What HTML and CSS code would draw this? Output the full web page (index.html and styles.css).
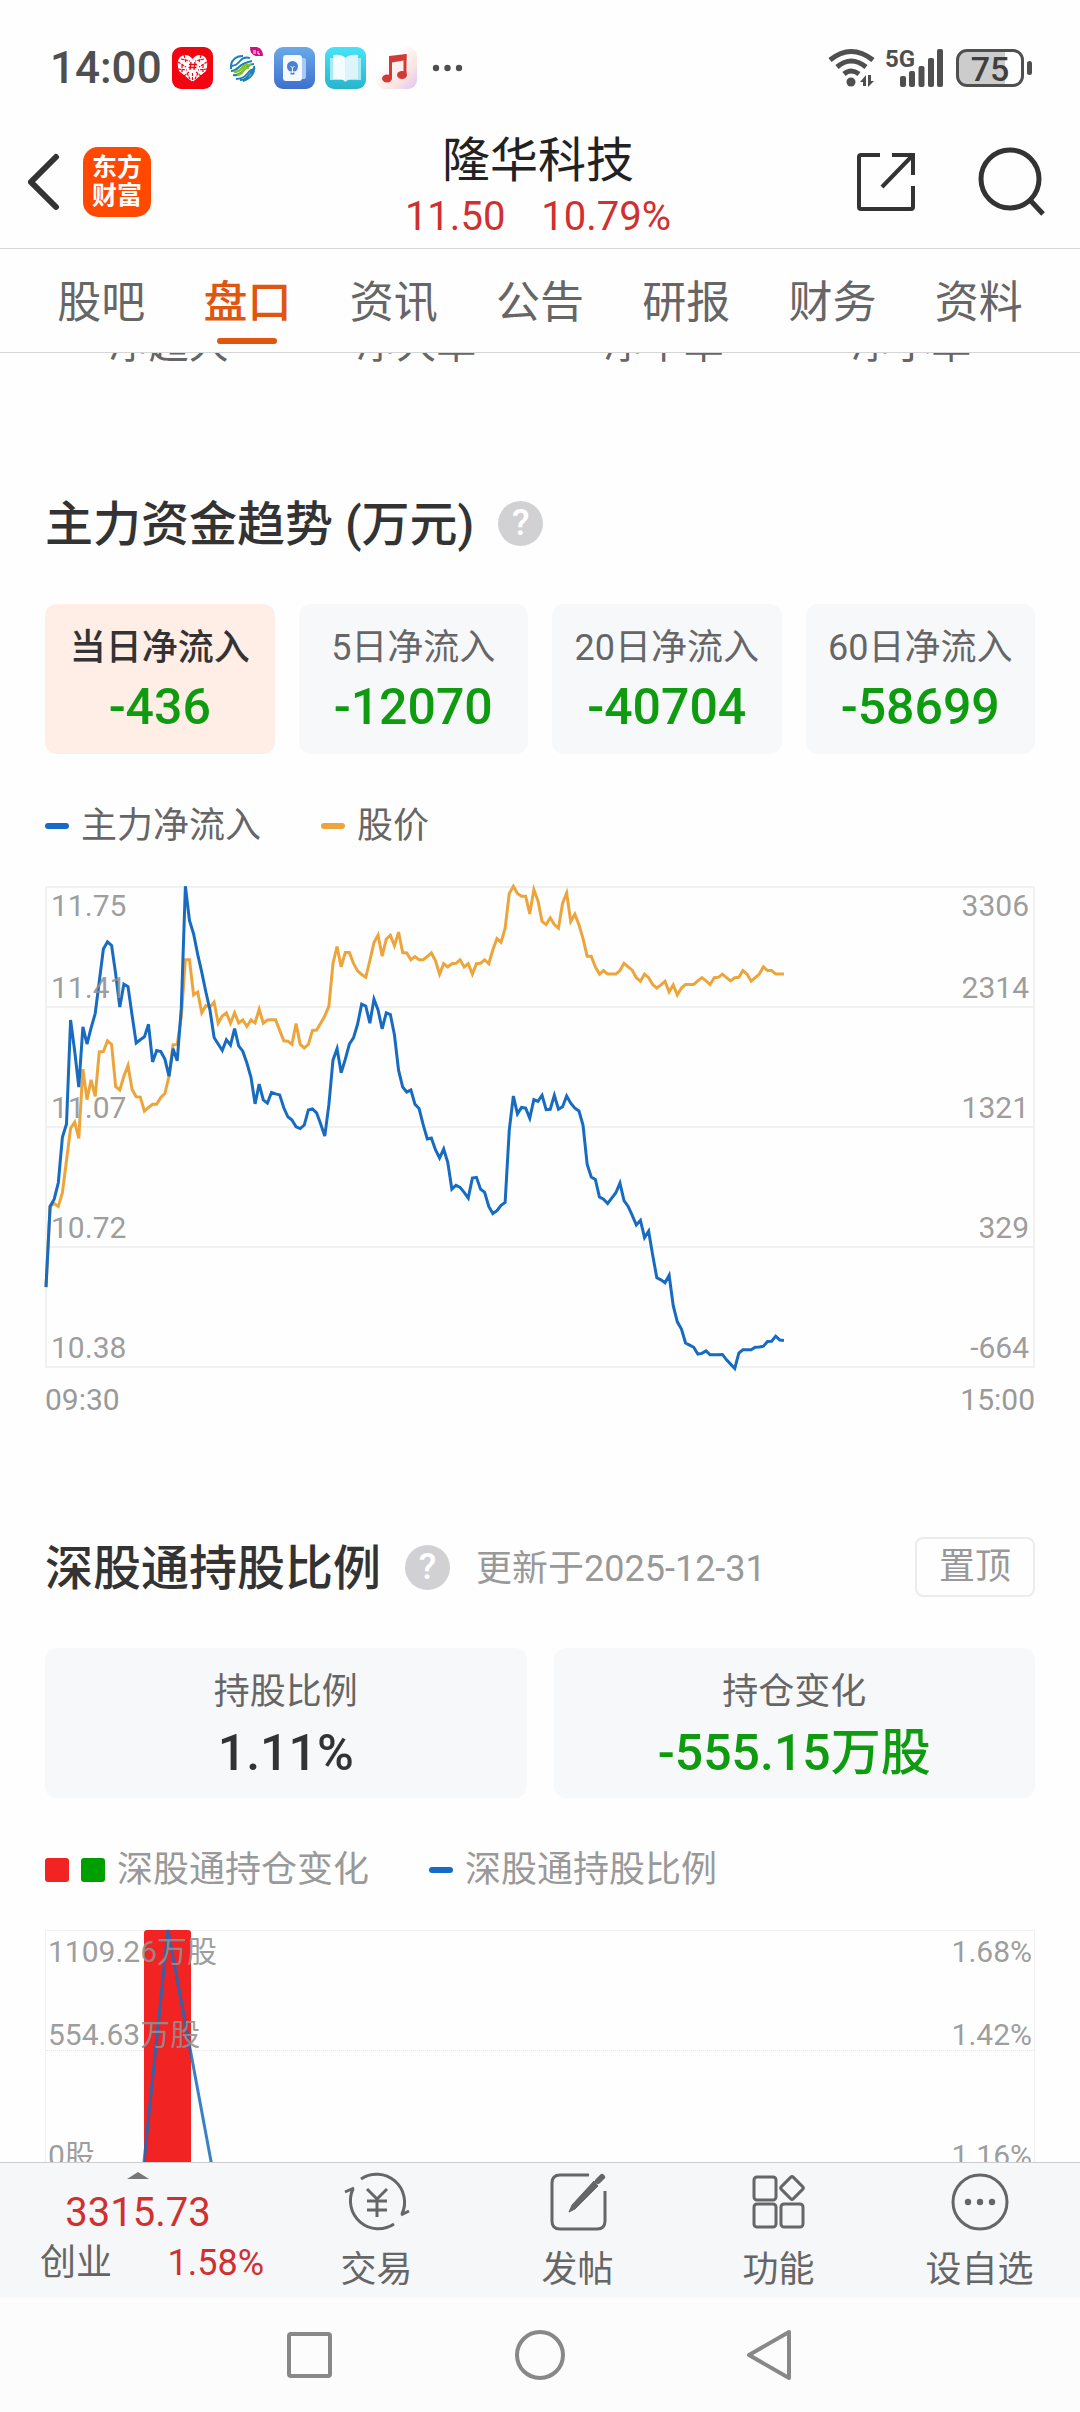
FILE: index.html
```html
<!DOCTYPE html>
<html lang="zh-CN">
<head>
  <meta charset="UTF-8" />
  <meta name="viewport" content="width=device-width, initial-scale=1.0"/>
  <title>隆华科技</title>
  <link rel="stylesheet" href="styles.css">
</head>
<body>
  <div class="status">
    <span class="status-time">14:00</span>
    <div class="status-apps">
      <svg viewBox="0 0 41 42">
        <rect width="41" height="42" rx="9" fill="#f20510"/>
        <path d="M20.500 35L7 24Q4 15 8 10Q15 5 20.500 12Q26 5 33 10Q37 15 34 24Z" fill="#fff"/>
        <path d="M6 15l8 5M12 8l2 8M35 15l-8 5M29 8l-2 8M6 22l9 1M35 22l-9 1M12 29l5-4M29 29l-5-4M20.500 26v9M9 12l9 2M32 12l-9 2M10 18v8M31 18v8M15 26l3 6M26 26l-3 6" stroke="#f20510" stroke-width="1.200" stroke-dasharray="3 1"/>
        <path d="M19 15l-1 8M23 15l-1 8M17 17.500h8M16.500 20.500h8" stroke="#f20510" stroke-width="1.300"/>
      </svg>
      <svg viewBox="0 0 41 42" fill="none">
        <path d="M8 18Q10 9 20 9M8 22v-3q5 0 9-5t10-3M8 24q4 0 8-4t13-6M31 19q1 5-2 9t-9 6M32 22q-4 0-8 5t-11 5M31 17q-5 0-10 6t-11 5M17 33q5 0 8-4t6-5" stroke="#1b7fb8" stroke-width="2"/>
        <path d="M11 25q5 0 8-4t7-3l2-1M14 28q4 0 6-4t6-3" stroke="#8cc220" stroke-width="2.400"/>
        <path d="M27 0h7q6 2 6 9h-7q-6-1-6-9z" fill="#cf1080"/>
        <path d="M30 4h3M30 6h3M35 4v3h2" stroke="#fff"/>
      </svg>
      <svg viewBox="0 0 41 42">
        <defs><linearGradient id="note" x2="0" y2="1"><stop stop-color="#6aa9ea"/><stop offset="1" stop-color="#3f70cd"/></linearGradient></defs>
        <rect width="41" height="42" rx="9" fill="url(#note)"/>
        <rect x="26" y="11" width="6" height="21" rx="2" fill="#a9c8f3"/>
        <rect x="9" y="8" width="19" height="26" rx="3" fill="#f5f9ff"/>
        <circle cx="18.500" cy="19.500" r="5.500" fill="#4a80d6"/>
        <path d="M16 25h5v3h-5zM16.500 19l2 2 2-2M18.500 21v5" fill="#4a80d6" stroke="#f5f9ff"/>
      </svg>
      <svg viewBox="0 0 41 42">
        <defs><linearGradient id="book" x2="0" y2="1"><stop stop-color="#46e4f7"/><stop offset="1" stop-color="#28b4cc"/></linearGradient></defs>
        <rect width="41" height="42" rx="9" fill="url(#book)"/>
        <path d="M5 11h31v22H23l-2.500 2L18 33H5z" fill="#a8e9f2"/>
        <path d="M8 8q9-1 12.500 3v23q-4-3-12.500-2z" fill="#f4fcff"/>
        <path d="M33 8q-9-1-12.500 3v23q4-3 12.500-2z" fill="#dff3fa"/>
      </svg>
      <svg viewBox="0 0 41 42">
        <defs><linearGradient id="music" x2="1" y2="1"><stop offset=".3" stop-color="#fff"/><stop offset=".7" stop-color="#fbe3e0"/><stop offset="1" stop-color="#dcc4f8"/></linearGradient></defs>
        <rect width="41" height="42" rx="9" fill="url(#music)"/>
        <path d="M14.500 31V12L29 9v19" fill="none" stroke="#d33a35" stroke-width="3"/>
        <path d="M13 9l17.500-2v6L13 16z" fill="#d33a35"/>
        <ellipse cx="11" cy="31.500" rx="5" ry="4" fill="#d33a35"/>
        <ellipse cx="26" cy="28" rx="5" ry="4" fill="#d33a35"/>
      </svg>
      <svg viewBox="0 0 41 42" fill="#4f4f4f"><circle cx="9" cy="21" r="3.200"/><circle cx="20.500" cy="21" r="3.200"/><circle cx="32" cy="21" r="3.200"/></svg>
    </div>
    <div class="status-signal">
      <svg class="wifi" viewBox="0 0 48 40" fill="none" stroke="#4f4f4f" stroke-width="5">
        <path d="M2 12Q23-5 45 12M9 19Q23 7 38 19M16 26Q23 20 31 26"/>
        <circle cx="23" cy="34" r="4.500" fill="#4f4f4f" stroke="none"/>
        <path d="M32 34l6-7v11h-3v-4zM46 33l-6 6V27h3v6z" fill="#4f4f4f" stroke="none"/>
      </svg>
      <div class="cell">
        <span class="cell-type">5G</span>
        <svg viewBox="0 0 44 38" fill="#4f4f4f">
          <rect y="27" width="6" height="11" rx="2"/><rect x="9" y="22" width="6" height="16" rx="2"/><rect x="18.500" y="17" width="6" height="21" rx="2"/><rect x="28" y="9" width="6" height="29" rx="2"/><rect x="37" width="6" height="38" rx="2"/>
        </svg>
      </div>
      <div class="battery">75</div>
    </div>
  </div>

  <header class="header">
    <div class="header-side">
      <button class="icon-btn" aria-label="返回">
        <svg width="34" height="58" viewBox="0 0 34 58" fill="none" stroke="#333" stroke-width="6" stroke-linecap="round"><path d="M28 4L3 29l25 25"/></svg>
      </button>
      <a class="logo" href="#">东方<br>财富</a>
    </div>
    <div class="stock">
      <h1>隆华科技</h1>
      <p><span>11.50</span><span>10.79%</span></p>
    </div>
    <div class="header-side header-right">
      <button class="icon-btn" aria-label="分享">
        <svg width="60" height="60" viewBox="0 0 60 60" fill="none" stroke="#333" stroke-width="4"><path d="M24 3H5q-2 0-2 2v50q0 2 2 2h50q2 0 2-2V34M36 3h21v20M57 3L26 35"/></svg>
      </button>
      <button class="icon-btn" aria-label="搜索">
        <svg width="70" height="70" viewBox="0 0 70 70" fill="none" stroke="#333" stroke-width="5"><circle cx="32" cy="32" r="29"/><path d="M52 53l13 14"/></svg>
      </button>
    </div>
  </header>

  <nav class="tabs">
    <a href="#">股吧</a>
    <a href="#" class="active">盘口</a>
    <a href="#">资讯</a>
    <a href="#">公告</a>
    <a href="#">研报</a>
    <a href="#">财务</a>
    <a href="#">资料</a>
  </nav>

  <main>
    <div class="orders">
      <span>净超大</span><span>净大单</span><span>净中单</span><span>净小单</span>
    </div>

    <section>
      <div class="section-head">
        <h2>主力资金趋势 (万元)</h2>
        <button class="help" aria-label="说明">?</button>
      </div>
      <div class="cards">
        <button class="card active"><span>当日净流入</span><b class="green">-436</b></button>
        <button class="card"><span>5日净流入</span><b class="green">-12070</b></button>
        <button class="card"><span>20日净流入</span><b class="green">-40704</b></button>
        <button class="card"><span>60日净流入</span><b class="green">-58699</b></button>
      </div>
      <div class="legend">
        <span><i class="dash blue"></i>主力净流入</span>
        <span><i class="dash orange"></i>股价</span>
      </div>
      <div class="chart">
        <svg viewBox="0 47 2970 1339" preserveAspectRatio="none">
          <polyline id="priceLine" class="line-orange" />
          <polyline id="flowLine" class="line-blue" />
        </svg>
        <div class="chart-row first">
          <p><span>11.75</span><span>3306</span></p>
          <p><span>11.41</span><span>2314</span></p>
        </div>
        <div class="chart-row"><p><span>11.07</span><span>1321</span></p></div>
        <div class="chart-row"><p><span>10.72</span><span>329</span></p></div>
        <div class="chart-row"><p><span>10.38</span><span>-664</span></p></div>
      </div>
      <div class="axis"><span>09:30</span><span>15:00</span></div>
    </section>

    <section>
      <div class="section-head">
        <h2>深股通持股比例</h2>
        <button class="help" aria-label="说明">?</button>
        <span class="updated">更新于2025-12-31</span>
        <button class="pin">置顶</button>
      </div>
      <div class="cards two">
        <div class="card"><span>持股比例</span><b>1.11%</b></div>
        <div class="card"><span>持仓变化</span><b class="green">-555.15万股</b></div>
      </div>
      <div class="legend light">
        <span><i class="square red"></i><i class="square green-bg"></i>深股通持仓变化</span>
        <span><i class="dash blue"></i>深股通持股比例</span>
      </div>
      <div class="chart holding">
        <svg viewBox="0 0 990 240" preserveAspectRatio="none">
          <rect x="99" y="0" width="47" height="240" rx="3" fill="#f22323"/>
          <polyline class="line-blue faded" points="98,240 123,0 168,240" />
        </svg>
        <div class="chart-row first">
          <p><span>1109.26万股</span><span>1.68%</span></p>
          <p><span>554.63万股</span><span>1.42%</span></p>
        </div>
        <div class="chart-row"><p><span>0股</span><span>1.16%</span></p></div>
      </div>
    </section>
  </main>

  <footer class="toolbar">
    <a href="#" class="index">
      <i class="caret"></i>
      <strong>3315.73</strong>
      <span class="index-row"><span>创业</span><em>1.58%</em></span>
    </a>
    <a href="#">
      <svg viewBox="0 0 66 60"><path d="M17 7A28 28 0 0 1 58 42M50 52A28 28 0 0 1 9 17M1 20l9-4M57 43l8-4M23 17l10 10 10-10M33 27v18M23 29h20M23 38h20"/></svg>
      <span>交易</span>
    </a>
    <a href="#">
      <svg viewBox="0 0 66 60"><path d="M44 3H15q-8 0-8 8v38q0 8 8 8h37q8 0 8-8V19"/><path d="M57 5l-4 4" stroke-width="6" stroke-linecap="round"/><path d="M49 9l4 5-23 23-6 3 3-7z" fill="#666" stroke-width="1"/></svg>
      <span>发帖</span>
    </a>
    <a href="#">
      <svg viewBox="0 0 66 60"><rect x="8" y="5" width="22" height="23" rx="3"/><rect x="8" y="32" width="22" height="23" rx="3"/><rect x="35" y="32" width="22" height="23" rx="3"/><rect x="37.500" y="7.500" width="17" height="17" rx="2" transform="rotate(45 46 16)"/></svg>
      <span>功能</span>
    </a>
    <a href="#">
      <svg viewBox="0 0 66 60"><circle cx="33" cy="30" r="27"/><g fill="#666" stroke="none"><circle cx="21" cy="30" r="3.200"/><circle cx="33" cy="30" r="3.200"/><circle cx="45" cy="30" r="3.200"/></g></svg>
      <span>设自选</span>
    </a>
  </footer>

  <div class="sysnav">
    <button aria-label="最近任务"><svg viewBox="0 0 54 54"><rect x="6" y="6" width="41" height="42" rx="2"/></svg></button>
    <button aria-label="主页"><svg viewBox="0 0 54 54"><circle cx="27" cy="27" r="23"/></svg></button>
    <button aria-label="返回"><svg viewBox="0 0 54 54"><path d="M46 4v46L6 27z"/></svg></button>
  </div>

  <script src="chart.js"></script>
</body>
</html>
```
FILE: styles.css
```css
* {
  box-sizing: border-box;
}

body {
  margin: 0;
  height: 100vh;
  display: flex;
  flex-direction: column;
  background: #fefefe;
  color: #333;
  font-family: Roboto, "Noto Sans CJK SC", sans-serif;
  font-size: 36px;
  line-height: 44px;
}

h1, h2, p {
  margin: 0;
}

a {
  color: inherit;
  text-decoration: none;
}

button {
  padding: 0;
  border: 0;
  background: none;
  color: inherit;
  font: inherit;
}

svg {
  display: block;
}

/* status bar */
.status {
  flex: none;
  height: 136px;
  padding: 0 56px 0 50px;
  display: flex;
  align-items: center;
  color: #4f4f4f;
}

.status-time {
  font-size: 44px;
  font-weight: 500;
}

.status-apps {
  display: flex;
  gap: 10px;
  margin-left: 10px;
}

.status-apps svg {
  width: 41px;
  height: 42px;
}

.status-signal {
  display: flex;
  align-items: center;
  gap: 12px;
  margin-left: auto;
}

.wifi {
  width: 48px;
  height: 40px;
}

.cell {
  position: relative;
  padding-left: 12px;
}

.cell svg {
  width: 44px;
  height: 38px;
}

.cell-type {
  position: absolute;
  left: -3px;
  top: 0;
  font-size: 24px;
  font-weight: 700;
  line-height: 20px;
}

.battery {
  position: relative;
  width: 68px;
  height: 38px;
  border: 3px solid #4f4f4f;
  border-radius: 11px;
  background: linear-gradient(90deg, #ccc 75%, #fefefe 75%);
  color: #3f3f3f;
  font-size: 34px;
  font-weight: 500;
  line-height: 34px;
  text-align: center;
}

.battery::after {
  content: "";
  position: absolute;
  right: -11px;
  top: 9px;
  width: 5px;
  height: 14px;
  border-radius: 3px;
  background: #4f4f4f;
}

/* header */
.header {
  flex: none;
  height: 113px;
  padding: 0 28px 20px;
  display: flex;
  align-items: center;
  border-bottom: 1px solid #d5d5d5;
}

.header-side {
  flex: 1;
  display: flex;
  align-items: center;
  gap: 21px;
}

.header-right {
  justify-content: flex-end;
  gap: 62px;
  padding-right: 4px;
}

.logo {
  width: 68px;
  height: 70px;
  padding: 7px 0;
  border-radius: 15px;
  background: #ff4800;
  color: #fff;
  font-size: 25px;
  font-weight: 700;
  line-height: 28px;
  text-align: center;
}

.stock {
  padding-top: 14px;
  text-align: center;
}

.stock h1 {
  color: #222;
  font-size: 48px;
  font-weight: 400;
  line-height: 56px;
}

.stock p {
  display: flex;
  justify-content: center;
  gap: 36px;
  color: #d0302f;
  font-size: 40px;
  line-height: 56px;
}

/* tabs */
.tabs {
  flex: none;
  display: flex;
  padding: 5px 28px 0;
  border-bottom: 1px solid #d5d5d5;
  color: #666;
  font-size: 44px;
  line-height: 98px;
  text-align: center;
}

.tabs a {
  position: relative;
  flex: 1;
}

.tabs .active {
  color: #e0560e;
  font-weight: 500;
}

.tabs .active::after {
  content: "";
  position: absolute;
  left: 50%;
  bottom: 8px;
  width: 60px;
  height: 6px;
  margin-left: -30px;
  border-radius: 3px;
  background: #e0560e;
}

/* scrolled content */
main {
  flex: 1;
  min-height: 0;
  overflow: hidden;
  padding: 0 45px;
}

.orders {
  display: flex;
  margin: -32px 0 7px;
  color: #666;
  font-size: 40px;
  line-height: 48px;
  text-align: center;
}

.orders span {
  flex: 1;
}

section {
  padding-top: 117px;
}

.section-head {
  display: flex;
  align-items: center;
  height: 60px;
}

.section-head h2 {
  padding-top: 4px;
  font-size: 48px;
  font-weight: 500;
  line-height: 56px;
}

.help {
  width: 45px;
  height: 45px;
  margin-left: 24px;
  border-radius: 50%;
  background: #d1d1d4;
  color: #fff;
  font-size: 36px;
  font-weight: 500;
  line-height: 45px;
}

.updated {
  margin-left: 26px;
  padding-top: 4px;
  color: #999;
}

.pin {
  width: 120px;
  height: 60px;
  margin-left: auto;
  border: 2px solid #ececec;
  border-radius: 8px;
  color: #999;
}

.cards {
  display: grid;
  grid-template-columns: repeat(4, 1fr);
  gap: 24px;
  margin-top: 51px;
}

.cards.two {
  grid-template-columns: 1fr 1fr;
  gap: 27px;
}

.card {
  display: flex;
  flex-direction: column;
  align-items: center;
  gap: 7px;
  height: 150px;
  padding-top: 22px;
  border-radius: 12px;
  background: #f7f8fa;
}

.card span {
  color: #666;
}

.card b {
  font-size: 50px;
  font-weight: 500;
  line-height: 60px;
}

.two b {
  line-height: 64px;
}

.card.active {
  background: #ffeee6;
}

.card.active span {
  color: #333;
  font-weight: 500;
}

.card .green {
  color: #0f9b0f;
}

.legend {
  display: flex;
  gap: 60px;
  margin-top: 50px;
  color: #666;
}

.legend.light {
  color: #999;
}

.legend span {
  display: flex;
  align-items: center;
  gap: 12px;
}

.dash {
  width: 24px;
  height: 6px;
  border-radius: 3px;
}

.square {
  width: 24px;
  height: 24px;
  border-radius: 3px;
}

.blue { background: #176bc8; }
.orange { background: #eda53b; }
.red { background: #f22323; }
.green-bg { background: #009f00; }

/* charts */
.chart {
  position: relative;
  margin-top: 38px;
  border: 2px solid #f1f1f1;
}

.chart svg {
  position: absolute;
  left: -1px;
  top: -1px;
  width: calc(100% + 2px);
  height: calc(100% + 2px);
  overflow: visible;
}

.line-blue,
.line-orange {
  fill: none;
  stroke-width: 3;
  vector-effect: non-scaling-stroke;
}

.line-blue { stroke: #176bc0; }
.line-orange { stroke: #eda53b; }

.faded {
  opacity: 0.85;
}

.chart-row {
  display: flex;
  flex-direction: column;
  justify-content: flex-end;
  height: 120px;
  border-bottom: 2px solid #f1f1f1;
}

.chart-row.first {
  justify-content: space-between;
}

.chart-row:last-child {
  height: 118px;
  border-bottom: 0;
}

.chart-row p {
  position: relative;
  display: flex;
  justify-content: space-between;
  padding: 0 4px;
  color: rgba(145, 145, 145, 0.9);
  font-size: 30px;
  line-height: 36px;
}

.holding {
  border-width: 1px;
}

.holding .chart-row p {
  padding: 0 2px;
  line-height: 30px;
}

.holding .first {
  padding-top: 6px;
  border-bottom: 1px dotted #e6e6e6;
}

.holding .chart-row:last-child {
  height: 120px;
}

.axis {
  display: flex;
  justify-content: space-between;
  margin-top: 12px;
  color: #999;
  font-size: 30px;
  line-height: 40px;
}

/* bottom toolbar */
.toolbar {
  flex: none;
  display: grid;
  grid-template-columns: 276px repeat(4, 1fr);
  height: 135px;
  border-top: 1px solid #ccc;
  background: #f6f7f9;
  color: #666;
}

.toolbar a {
  display: flex;
  flex-direction: column;
  align-items: center;
  gap: 16px;
  padding-top: 9px;
}

.toolbar svg {
  width: 66px;
  height: 60px;
  fill: none;
  stroke: #666;
  stroke-width: 3;
}

.toolbar .index {
  gap: 4px;
  color: #666;
}

.caret {
  border: 11px solid transparent;
  border-top: 0;
  border-bottom: 7px solid #777;
}

.index strong {
  color: #d0302f;
  font-size: 40px;
  font-weight: 400;
  line-height: 60px;
}

.index-row {
  display: flex;
  justify-content: space-between;
  width: 100%;
  padding: 0 12px 0 40px;
  margin-top: -6px;
}

.index-row em {
  color: #d0302f;
  font-style: normal;
}

/* system navigation */
.sysnav {
  flex: none;
  display: flex;
  align-items: center;
  height: 115px;
  padding: 0 18%;
  background: #fcfcfc;
}

.sysnav button {
  flex: 1;
}

.sysnav svg {
  width: 54px;
  height: 54px;
  margin: 0 auto;
  fill: none;
  stroke: #888;
  stroke-width: 4;
  stroke-linejoin: round;
}
```
FILE: chart.js
```js
// one value per trading minute, 241 slots on the axis
const STEP = 2970 / 241;

const flow = [
  1163, 938, 918, 872, 745, 708, 418, 505, 605, 437, 485, 440, 400, 310, 220, 200, 210, 290, 382, 318,
  325, 405, 482, 473, 465, 430, 535, 503, 506, 527, 575, 498, 532, 385, 45, 140, 178, 235, 285, 340,
  390, 467, 485, 503, 473, 488, 442, 490, 505, 538, 578, 652, 597, 641, 650, 620, 624, 627, 663, 688,
  697, 716, 721, 711, 669, 666, 677, 708, 742, 655, 530, 498, 565, 528, 485, 468, 430, 374, 379, 427,
  360, 390, 443, 398, 403, 460, 558, 605, 619, 613, 653, 665, 710, 750, 747, 780, 803, 778, 815, 890,
  879, 885, 899, 915, 859, 857, 890, 899, 938, 958, 950, 935, 927, 725, 630, 680, 662, 664, 692, 640,
  645, 628, 668, 667, 628, 667, 660, 630, 650, 664, 672, 712, 820, 856, 863, 912, 918, 930, 915, 900,
  873, 922, 938, 963, 990, 977, 1025, 1007, 1075, 1137, 1143, 1151, 1130, 1215, 1260, 1280, 1319, 1325, 1331, 1350,
  1348, 1341, 1352, 1352, 1352, 1351, 1366, 1378, 1390, 1347, 1338, 1338, 1338, 1331, 1330, 1328, 1315, 1314, 1300, 1311,
  1312
];

const price = [
  1163, 938, 930, 938, 900, 810, 720, 703, 748, 555, 640, 585, 631, 507, 506, 476, 486, 604, 613, 575,
  545, 612, 632, 633, 672, 662, 653, 653, 634, 623, 575, 487, 486, 410, 250, 250, 348, 340, 398, 378,
  382, 368, 427, 407, 398, 427, 398, 426, 418, 436, 418, 426, 388, 427, 418, 417, 417, 447, 476, 477,
  486, 428, 486, 496, 486, 447, 446, 427, 407, 380, 260, 213, 270, 230, 230, 260, 281, 291, 299, 252,
  202, 181, 240, 192, 182, 211, 173, 230, 231, 250, 241, 250, 250, 241, 231, 252, 290, 261, 270, 261,
  260, 250, 270, 261, 290, 261, 260, 250, 261, 222, 191, 201, 162, 65, 45, 65, 73, 73, 122, 54,
  85, 143, 152, 133, 152, 162, 93, 64, 143, 123, 152, 191, 240, 240, 270, 290, 280, 290, 290, 290,
  280, 260, 270, 279, 300, 310, 290, 300, 319, 329, 320, 310, 340, 320, 348, 329, 319, 319, 319, 309,
  300, 309, 319, 300, 299, 290, 300, 309, 300, 299, 280, 290, 310, 300, 290, 270, 280, 280, 290, 290,
  290
];

function drawLine(id, values) {
  const points = values.map((y, i) => `${(i * STEP).toFixed(1)},${y}`).join(' ');
  document.getElementById(id).setAttribute('points', points);
}

drawLine('priceLine', price);
drawLine('flowLine', flow);
```
